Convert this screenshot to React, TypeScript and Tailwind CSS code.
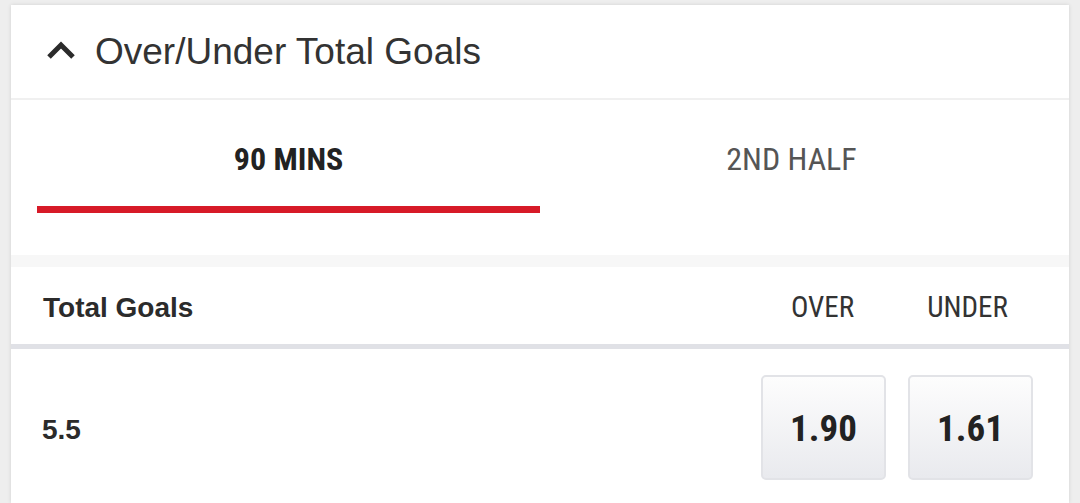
import React, { useState } from "react";

const condensed = { fontFamily: '"Roboto Condensed", Roboto, "Liberation Sans", sans-serif' };

interface Line {
  line: string;
  over: string;
  under: string;
}

const lines: Line[] = [{ line: "5.5", over: "1.90", under: "1.61" }];

const tabs = ["90 MINS", "2ND HALF"];

const OddsButton = ({ value }: { value: string }) => (
  <button
    className="flex h-[105px] w-[125px] items-center justify-center rounded-[5px] border-2 border-[#e2e3e7] bg-gradient-to-b from-[#fdfdfd] to-[#e9eaee] pt-[2px] text-[37px] font-bold text-[#222]"
    style={condensed}
  >
    {value}
  </button>
);

export default function App() {
  const [active, setActive] = useState(0);

  return (
    <div className="h-[503px] w-full overflow-hidden bg-[#eeeeee] pl-[11px] pr-[11px] pt-[5px]">
      <div
        className="h-full bg-white shadow-[0_0_4px_rgba(0,0,0,0.12)]"
        style={{ fontFamily: '"Liberation Sans", Arial, sans-serif' }}
      >
        {/* Market header */}
        <div className="flex h-[95px] items-center gap-[19px] border-b-2 border-[#f0f0f0] pl-[35px]">
          <svg width="30" height="22" viewBox="0 0 30 22" className="mt-[-5px]">
            <polyline
              points="3,19 15,7 27,19"
              fill="none"
              stroke="#2b2b2b"
              strokeWidth="5"
              strokeLinejoin="miter"
            />
          </svg>
          <h2 className="text-[37px] text-[#333]">Over/Under Total Goals</h2>
        </div>

        {/* Period tabs */}
        <div className="flex h-[155px] px-[26px]">
          {tabs.map((tab, i) => (
            <button
              key={tab}
              onClick={() => setActive(i)}
              className="flex flex-1 flex-col items-stretch"
            >
              <span
                className={`flex h-[106px] items-center justify-center pt-[11px] text-[32px] ${
                  i === active ? "font-bold text-[#222]" : "text-[#555]"
                }`}
                style={condensed}
              >
                {tab}
              </span>
              <span
                className={`h-[7px] w-full ${i === active ? "bg-[#d71a28]" : "bg-transparent"}`}
              />
            </button>
          ))}
        </div>

        <div className="h-[12px] bg-[#f7f7f7]" />

        {/* Column headers */}
        <div className="flex h-[82px] items-center border-b-[5px] border-[#e0e1e6] pl-[32px] pr-[36px] pt-[4px]">
          <span className="flex-1 text-[28px] font-bold text-[#2b2b2b]">Total Goals</span>
          <div className="flex gap-[22px] text-[29px] text-[#333]" style={condensed}>
            <span className="w-[125px] pr-[2px] text-center">OVER</span>
            <span className="w-[125px] pr-[6px] text-center">UNDER</span>
          </div>
        </div>

        {/* Lines */}
        {lines.map((l) => (
          <div key={l.line} className="flex items-center pl-[31px] pr-[36px] pt-[26px]">
            <span className="flex-1 pt-[4px] text-[28px] font-bold text-[#2b2b2b]">{l.line}</span>
            <div className="flex gap-[22px]">
              <OddsButton value={l.over} />
              <OddsButton value={l.under} />
            </div>
          </div>
        ))}
      </div>
    </div>
  );
}
